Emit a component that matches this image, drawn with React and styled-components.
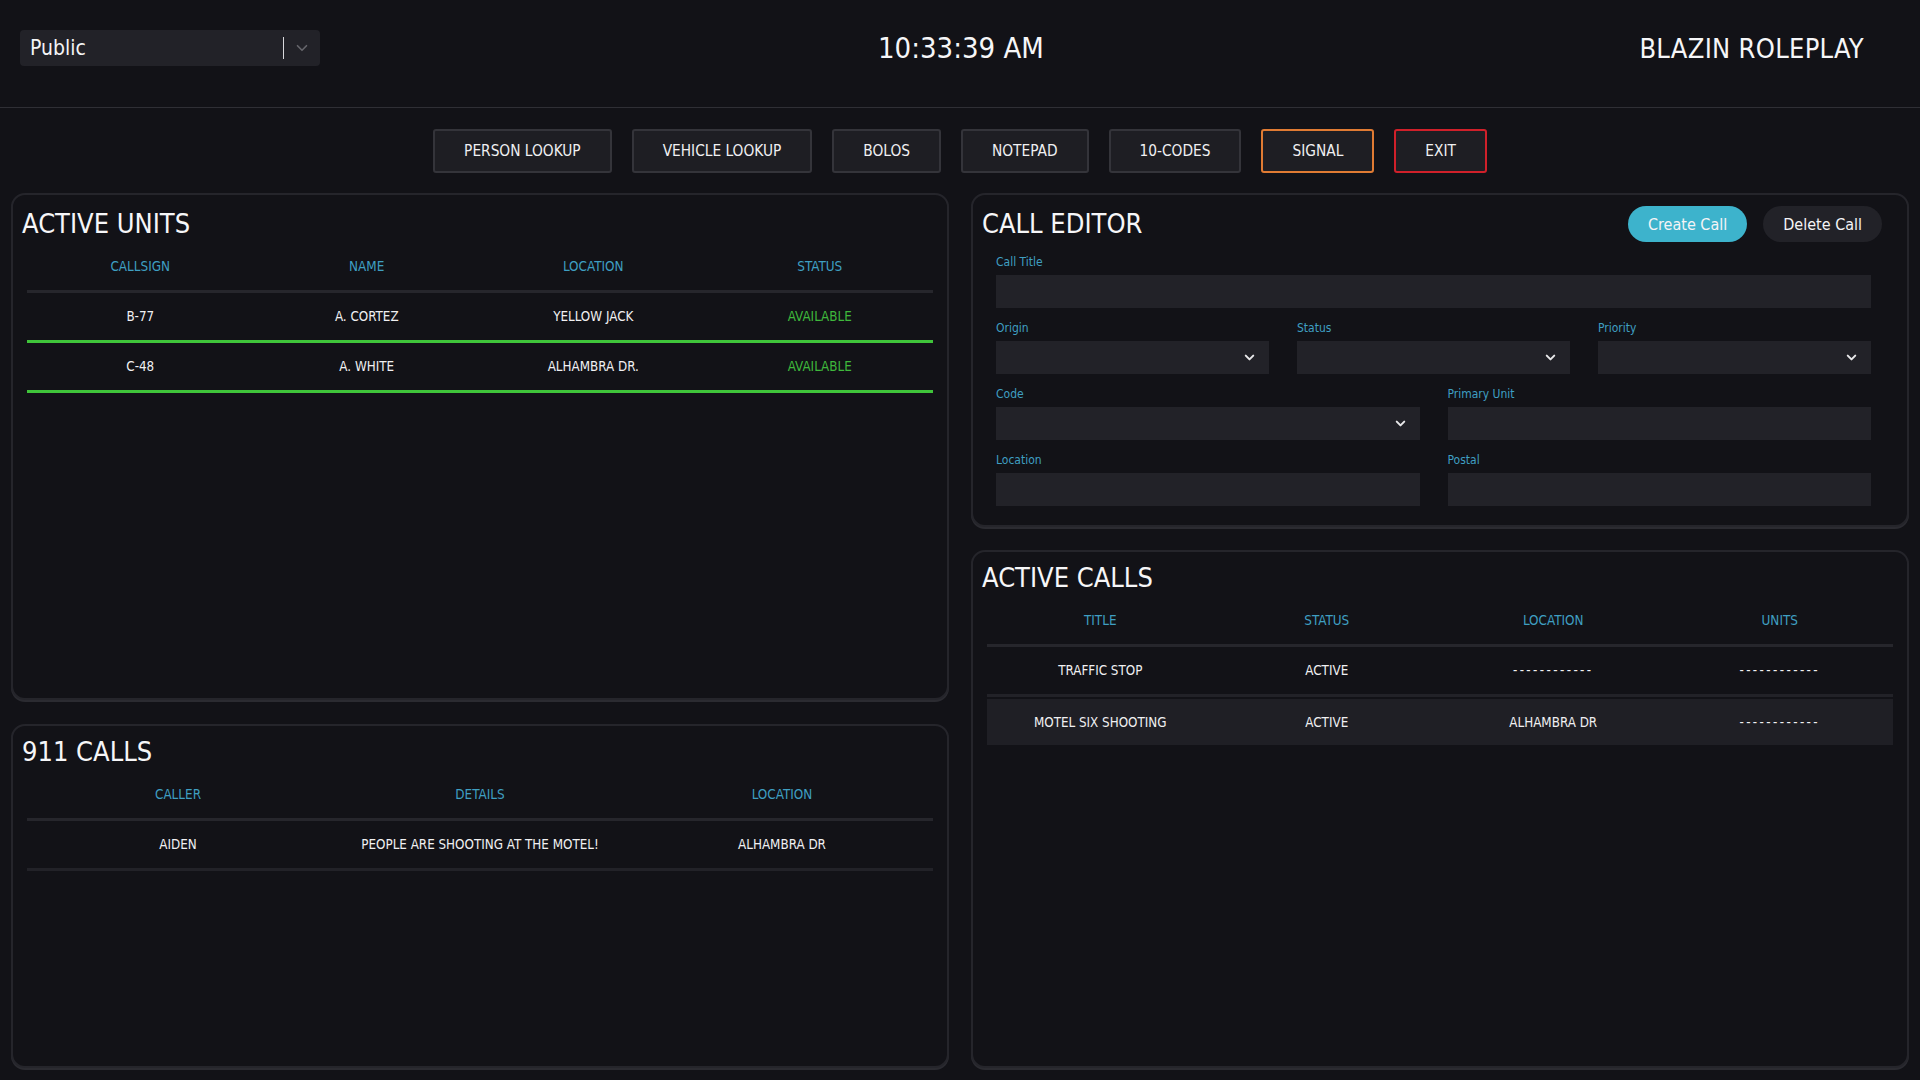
import React from "react";
import styled, { createGlobalStyle, css } from "styled-components";
import { ChevronDown } from "lucide-react";

const FONT = `"Liberation Sans Narrow", "DejaVu Sans Condensed", "Roboto Condensed", "Liberation Sans", sans-serif`;

const GlobalStyle = createGlobalStyle`
  html, body { margin: 0; padding: 0; background: #121217; }
  body { font-family: ${FONT}; color: #f1f1f3; }
  * { box-sizing: border-box; }
`;

const Page = styled.div`
  width: 1920px;
  height: 1080px;
  display: flex;
  flex-direction: column;
  background: #121217;
  overflow: hidden;
`;

const Header = styled.header`
  height: 108px;
  flex: none;
  display: flex;
  align-items: center;
  padding: 0 56px 11px 20px;
  border-bottom: 1px solid #2f2f35;
`;

const SelectBox = styled.div`
  width: 300px;
  height: 36px;
  background: #222228;
  border-radius: 4px;
  display: flex;
  align-items: center;
  padding-left: 10px;
  font-size: 21px;
  color: #f4f4f6;
`;

const SelectValue = styled.span`
  flex: 1;
`;

const SelectSep = styled.span`
  width: 1px;
  height: 22px;
  background: #d8d8dc;
`;

const SelectArrow = styled.span`
  width: 36px;
  display: flex;
  justify-content: center;
  color: #66666c;
`;

const Clock = styled.div`
  margin-left: 558px;
  font-size: 29px;
  color: #f6f6f8;
`;

const Brand = styled.div`
  margin-left: auto;
  font-size: 27px;
  letter-spacing: 0.3px;
  color: #f6f6f8;
`;

const Nav = styled.nav`
  flex: none;
  display: flex;
  justify-content: center;
  gap: 20px;
  margin-top: 21px;
`;

const NavButton = styled.button`
  height: 44px;
  padding: 0 29px;
  background: #1e1e23;
  border: 2px solid ${(p) => p.$accent || "#34343a"};
  border-radius: 3px;
  color: #f0f0f2;
  font-family: ${FONT};
  font-size: 15.3px;
`;

const Main = styled.main`
  flex: 1;
  display: grid;
  grid-template-columns: 1fr 1fr;
  column-gap: 22px;
  padding: 20px 11px 12px;
  min-height: 0;
`;

const Column = styled.div`
  display: grid;
  grid-template-rows: ${(p) => p.$rows};
  row-gap: ${(p) => p.$gap}px;
  min-height: 0;
`;

const Panel = styled.section`
  border: 2px solid #25252b;
  border-radius: 14px;
  box-shadow: 0 2px 0 #2b2b31;
  background: #121217;
  padding: ${(p) => (p.$top ? 11 : 8)}px 9px 0;
  min-height: 0;
  overflow: hidden;
`;

const PanelHead = styled.div`
  display: flex;
  align-items: center;
  justify-content: space-between;
  height: 36px;
`;

const Title = styled.h2`
  margin: 0;
  font-weight: 400;
  font-size: 27px;
  line-height: 36px;
  color: #f6f6f8;
`;

const Table = styled.div`
  margin: 0 5px;
`;

const HeadRow = styled.div`
  display: grid;
  grid-template-columns: repeat(${(p) => p.$cols}, 1fr);
  align-items: center;
  height: 51px;
  border-bottom: 3px solid #26262c;
`;

const HeadCell = styled.div`
  text-align: center;
  font-size: 13.4px;
  color: #3f9fc2;
`;

const Row = styled.div`
  display: grid;
  grid-template-columns: repeat(${(p) => p.$cols}, 1fr);
  align-items: center;
  height: 50px;
  border-bottom: 3px solid ${(p) => p.$line || "#222228"};
  ${(p) =>
    p.$selected &&
    css`
      background: #1f1f25;
      margin-top: 2px;
      height: 46px;
      border-bottom: none;
    `}
`;

const Cell = styled.div`
  text-align: center;
  font-size: 13.3px;
  color: ${(p) => p.$color || "#f0f0f2"};
  letter-spacing: ${(p) => (p.$dash ? "2.4px" : "0")};
`;

const PillButton = styled.button`
  height: 36px;
  padding: 0 20px;
  border: none;
  border-radius: 18px;
  font-family: ${FONT};
  font-size: 16px;
  color: #f4f4f6;
  background: ${(p) => (p.$primary ? "#3db3cc" : "#222228")};
`;

const HeadActions = styled.div`
  display: flex;
  gap: 16px;
  margin-right: 16px;
`;

const Form = styled.div`
  display: flex;
  flex-direction: column;
  gap: 12px;
  padding: 12px 27px 0 14px;
`;

const FieldRow = styled.div`
  display: grid;
  grid-template-columns: repeat(${(p) => p.$cols}, 1fr);
  column-gap: 28px;
`;

const Field = styled.label`
  display: flex;
  flex-direction: column;
  gap: 5px;
`;

const Label = styled.span`
  font-size: 12px;
  line-height: 16px;
  color: #3f9fc2;
`;

const Input = styled.div`
  height: 33px;
  background: #222228;
  display: flex;
  align-items: center;
  justify-content: flex-end;
  padding-right: 12px;
  color: #e8e8ea;
`;

const unitRows = [
  ["B-77", "A. CORTEZ", "YELLOW JACK", "AVAILABLE"],
  ["C-48", "A. WHITE", "ALHAMBRA DR.", "AVAILABLE"],
];

const callRows = [
  { cells: ["TRAFFIC STOP", "ACTIVE", "------------", "------------"] },
  { cells: ["MOTEL SIX SHOOTING", "ACTIVE", "ALHAMBRA DR", "------------"], selected: true },
];

function FormField({ label, select }) {
  return (
    <Field>
      <Label>{label}</Label>
      <Input>{select && <ChevronDown size={15} strokeWidth={3.2} />}</Input>
    </Field>
  );
}

export default function App() {
  return (
    <>
      <GlobalStyle />
      <Page>
        <Header>
          <SelectBox>
            <SelectValue>Public</SelectValue>
            <SelectSep />
            <SelectArrow>
              <ChevronDown size={18} strokeWidth={2.2} />
            </SelectArrow>
          </SelectBox>
          <Clock>10:33:39 AM</Clock>
          <Brand>BLAZIN ROLEPLAY</Brand>
        </Header>

        <Nav>
          <NavButton>PERSON LOOKUP</NavButton>
          <NavButton>VEHICLE LOOKUP</NavButton>
          <NavButton>BOLOS</NavButton>
          <NavButton>NOTEPAD</NavButton>
          <NavButton>10-CODES</NavButton>
          <NavButton $accent="#e07b33">SIGNAL</NavButton>
          <NavButton $accent="#d0202a">EXIT</NavButton>
        </Nav>

        <Main>
          <Column $rows="507px 1fr" $gap={24}>
            <Panel $top>
              <Title>ACTIVE UNITS</Title>
              <Table>
                <HeadRow $cols={4}>
                  <HeadCell>CALLSIGN</HeadCell>
                  <HeadCell>NAME</HeadCell>
                  <HeadCell>LOCATION</HeadCell>
                  <HeadCell>STATUS</HeadCell>
                </HeadRow>
                {unitRows.map((r) => (
                  <Row key={r[0]} $cols={4} $line="#3fc43a">
                    <Cell>{r[0]}</Cell>
                    <Cell>{r[1]}</Cell>
                    <Cell>{r[2]}</Cell>
                    <Cell $color="#3fb83c">{r[3]}</Cell>
                  </Row>
                ))}
              </Table>
            </Panel>

            <Panel>
              <Title>911 CALLS</Title>
              <Table>
                <HeadRow $cols={3}>
                  <HeadCell>CALLER</HeadCell>
                  <HeadCell>DETAILS</HeadCell>
                  <HeadCell>LOCATION</HeadCell>
                </HeadRow>
                <Row $cols={3}>
                  <Cell>AIDEN</Cell>
                  <Cell>PEOPLE ARE SHOOTING AT THE MOTEL!</Cell>
                  <Cell>ALHAMBRA DR</Cell>
                </Row>
              </Table>
            </Panel>
          </Column>

          <Column $rows="334px 1fr" $gap={23}>
            <Panel $top>
              <PanelHead>
                <Title>CALL EDITOR</Title>
                <HeadActions>
                  <PillButton $primary>Create Call</PillButton>
                  <PillButton>Delete Call</PillButton>
                </HeadActions>
              </PanelHead>
              <Form>
                <FieldRow $cols={1}>
                  <FormField label="Call Title" />
                </FieldRow>
                <FieldRow $cols={3}>
                  <FormField label="Origin" select />
                  <FormField label="Status" select />
                  <FormField label="Priority" select />
                </FieldRow>
                <FieldRow $cols={2}>
                  <FormField label="Code" select />
                  <FormField label="Primary Unit" />
                </FieldRow>
                <FieldRow $cols={2}>
                  <FormField label="Location" />
                  <FormField label="Postal" />
                </FieldRow>
              </Form>
            </Panel>

            <Panel>
              <Title>ACTIVE CALLS</Title>
              <Table>
                <HeadRow $cols={4}>
                  <HeadCell>TITLE</HeadCell>
                  <HeadCell>STATUS</HeadCell>
                  <HeadCell>LOCATION</HeadCell>
                  <HeadCell>UNITS</HeadCell>
                </HeadRow>
                {callRows.map((r) => (
                  <Row key={r.cells[0]} $cols={4} $selected={r.selected}>
                    {r.cells.map((c, i) => (
                      <Cell key={i} $dash={/^-+$/.test(c)}>
                        {c}
                      </Cell>
                    ))}
                  </Row>
                ))}
              </Table>
            </Panel>
          </Column>
        </Main>
      </Page>
    </>
  );
}
